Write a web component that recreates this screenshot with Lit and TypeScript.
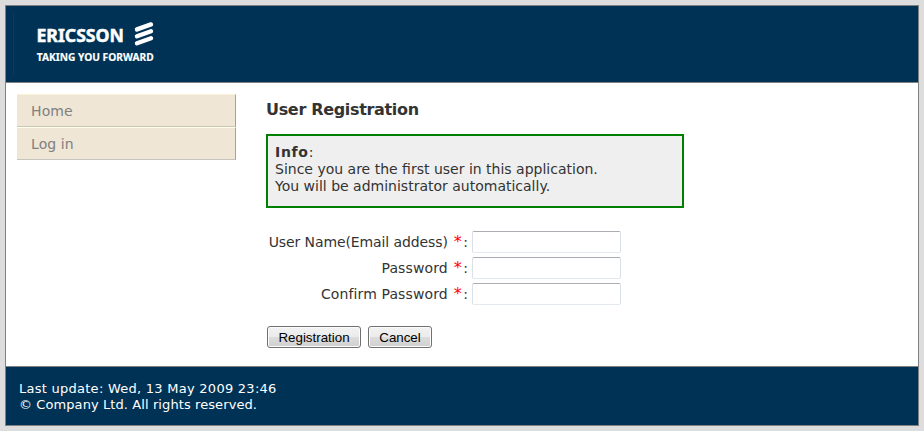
import { LitElement, html, css } from "lit";
import { customElement } from "lit/decorators.js";

@customElement("app-root")
export class AppRoot extends LitElement {
  static styles = css`
    :host {
      display: block;
      box-sizing: border-box;
      height: 431px;
      padding: 5px;
      background: #ddd;
      font: 14px/17px "DejaVu Sans", sans-serif;
      color: #333;
    }
    .page {
      box-sizing: border-box;
      width: 914px;
      height: 421px;
      border: 1px solid #808080;
      background: #fff;
      display: flex;
      flex-direction: column;
    }
    header {
      height: 76px;
      background: #003256;
      border-bottom: 1px solid #808080;
      display: flex;
    }
    header svg {
      display: block;
      width: 170px;
      height: 76px;
    }
    .brand {
      font-family: "Noto Sans", sans-serif;
      font-weight: 700;
      fill: #fff;
      stroke: #fff;
      stroke-width: 0.5;
    }
    .tagline {
      stroke-width: 0.15;
    }
    main {
      flex: 1;
      display: flex;
      padding: 11px 0 0 11px;
    }
    nav {
      width: 219px;
      margin-right: 30px;
    }
    nav a {
      display: block;
      box-sizing: border-box;
      height: 33px;
      padding: 8px 0 0 14px;
      background: #efe6d6;
      border-top: 1px solid #fbf3d8;
      border-bottom: 1px solid #c8c4bf;
      border-right: 1px solid #a9a194;
      color: #808080;
      letter-spacing: 0.1px;
    }
    nav a + a {
      border-top-color: #ffffe4;
    }
    h1 {
      margin: 7px 0 16px;
      font-size: 16px;
      line-height: 17px;
      letter-spacing: -0.33px;
    }
    .info {
      box-sizing: border-box;
      width: 418px;
      height: 74px;
      border: 2px solid #008000;
      background: #efefef;
      padding: 8px 7px;
    }
    .info b {
      letter-spacing: 0.7px;
    }
    .form {
      display: grid;
      grid-template-columns: 202px 149px;
      column-gap: 4px;
      row-gap: 4px;
      margin-top: 23px;
    }
    .form label {
      text-align: right;
      line-height: 22px;
      white-space: nowrap;
    }
    .full {
      letter-spacing: -0.1px;
    }
    .short {
      letter-spacing: 0.12px;
    }
    .req {
      display: inline-block;
      width: 11px;
      text-align: center;
      font-size: 16px;
      line-height: 17px;
      color: #f00;
    }
    input {
      box-sizing: border-box;
      width: 149px;
      height: 22px;
      margin: 0;
      background: #fff;
      border: 1px solid #dbdfe6;
      border-top-color: #abadb3;
      border-bottom-color: #e3e9ef;
      border-radius: 2px;
    }
    .actions {
      display: flex;
      gap: 7px;
      margin: 21px 0 0 1px;
    }
    button {
      box-sizing: border-box;
      height: 22px;
      padding: 1px 0 0;
      border: 1px solid #707070;
      border-radius: 3px;
      box-shadow: inset 0 0 0 1px #fcfcfc;
      background: linear-gradient(#f2f2f2, #ebebeb 50%, #ddd 50%, #cfcfcf);
      font: 13.33px/18px "Liberation Sans", sans-serif;
      color: #000;
    }
    .submit {
      width: 94px;
    }
    .cancel {
      width: 64px;
    }
    footer {
      box-sizing: border-box;
      height: 59px;
      border-top: 1px solid #808080;
      background: #003256;
      color: #fff;
      font-size: 13px;
      line-height: 16px;
      padding: 14px 0 0 13px;
    }
    .t {
      display: block;
      width: max-content;
    }
    .updated {
      letter-spacing: 0.26px;
    }
    .rights {
      letter-spacing: 0.09px;
    }
  `;

  render() {
    return html`
      <div class="page">
        <header>
          <svg viewBox="6 6 170 76">
            <path d="M13.5 13V75" stroke="#0b3b60" />
            <text class="brand" x="36.4" y="41.5" font-size="17.5" textLength="87.6" lengthAdjust="spacingAndGlyphs">ERICSSON</text>
            <text class="brand tagline" x="36.8" y="61" font-size="9.8" textLength="116.8" lengthAdjust="spacingAndGlyphs">TAKING YOU FORWARD</text>
            <g stroke="#fff" stroke-width="4.4" stroke-linecap="round">
              <path d="M137 29.4L151 24.4" />
              <path d="M137 36.3L151 31.3" />
              <path d="M137 43.2L151 38.2" />
            </g>
          </svg>
        </header>
        <main>
          <nav><a>Home</a><a>Log in</a></nav>
          <section>
            <h1><span class="t">User Registration</span></h1>
            <div class="info">
              <span class="t"><b>Info</b>:</span>
              <span class="t">Since you are the first user in this application.</span>
              <span class="t">You will be administrator automatically.</span>
            </div>
            <div class="form">
              <label><span class="full">User Name(Email addess)</span> <span class="req">*</span>:</label><input />
              <label><span class="short">Password</span> <span class="req">*</span>:</label><input type="password" />
              <label><span class="short">Confirm Password</span> <span class="req">*</span>:</label><input type="password" />
            </div>
            <div class="actions">
              <button class="submit">Registration</button>
              <button class="cancel">Cancel</button>
            </div>
          </section>
        </main>
        <footer>
          <span class="t updated">Last update: Wed, 13 May 2009 23:46</span>
          <span class="t rights">© Company Ltd. All rights reserved.</span>
        </footer>
      </div>
    `;
  }
}
